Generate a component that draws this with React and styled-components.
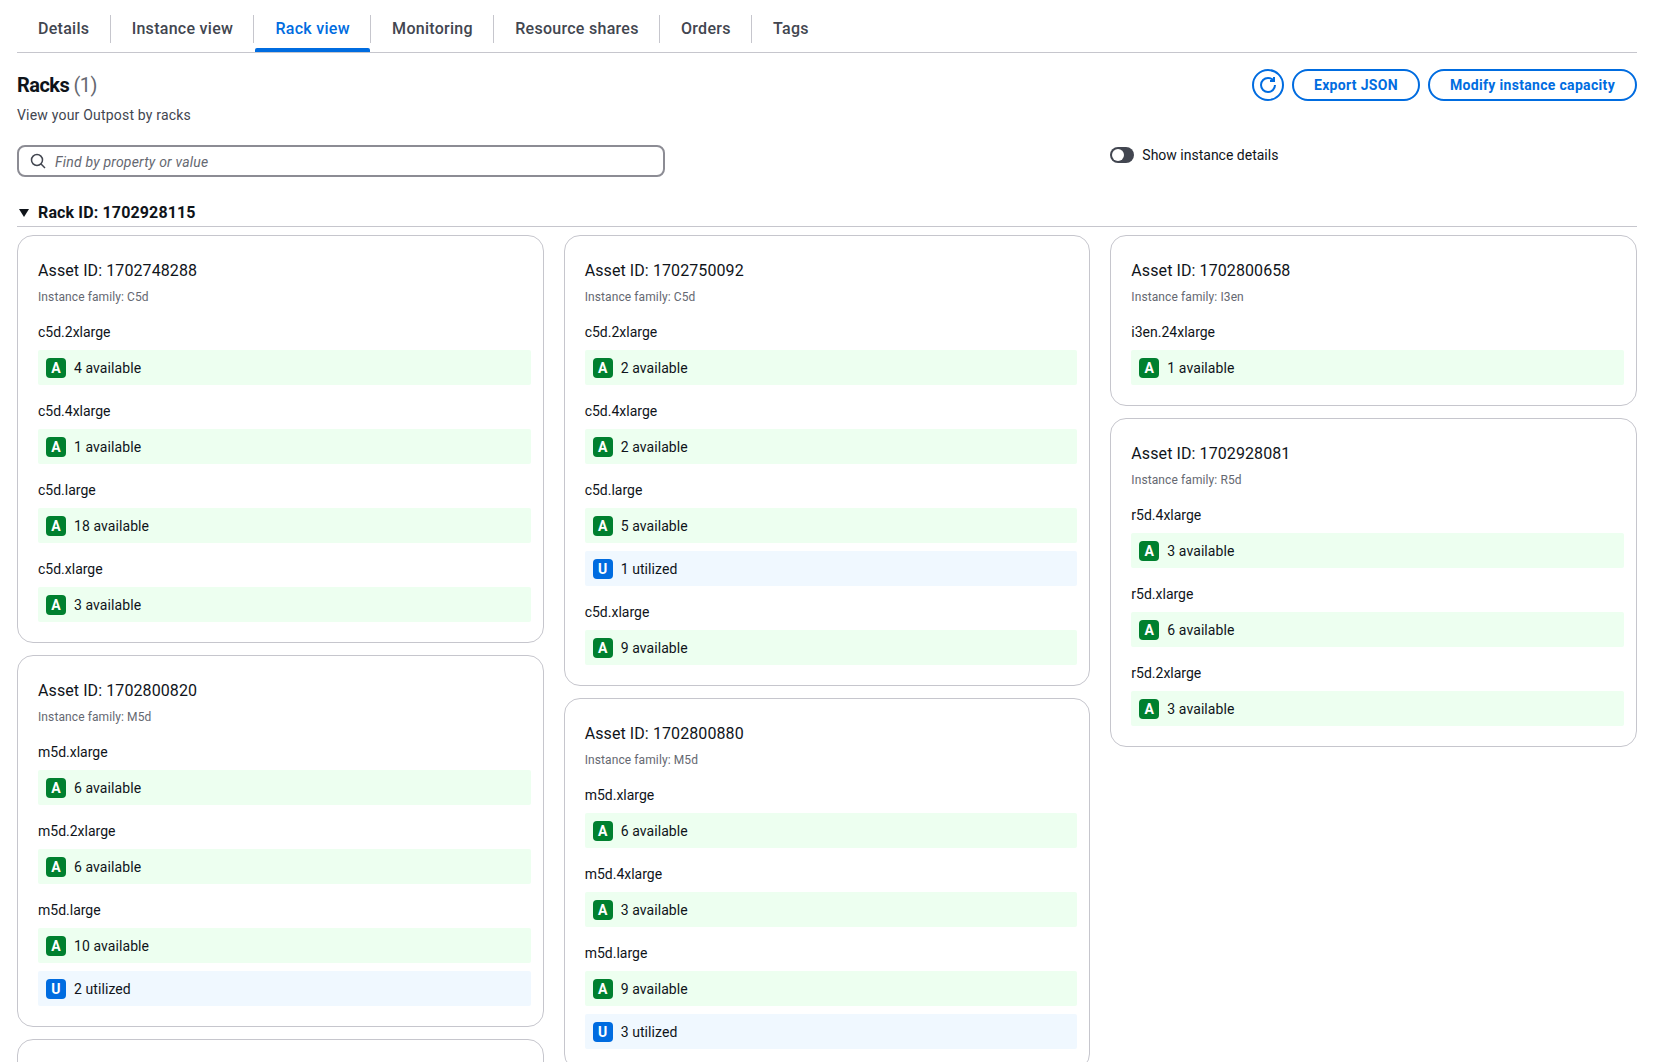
import React from 'react'
import styled, { createGlobalStyle } from 'styled-components'

const BLUE = '#006ce0'
const TEXT = '#0f141a'
const BORDER = '#c6c6cd'

const GlobalStyle = createGlobalStyle`
  html, body {
    margin: 0;
    background: #fff;
    color: ${TEXT};
    font-family: Roboto, "Liberation Sans", sans-serif;
    font-size: 14px;
    line-height: 20px;
  }
`

const Page = styled.div`
  height: 100vh;
  box-sizing: border-box;
  padding: 0 32px 0 17px;
  overflow: hidden;
`

const TabBar = styled.div`
  display: flex;
  height: 53px;
  box-sizing: border-box;
  border-bottom: 1px solid ${BORDER};
`

const Tab = styled.div`
  position: relative;
  padding-top: 15px;
  height: 52px;
  box-sizing: border-box;

  ${(p) =>
    p.$active &&
    `
    &::after {
      content: '';
      position: absolute;
      left: 1px;
      right: 1px;
      bottom: 0;
      height: 4px;
      background: ${BLUE};
      border-radius: 2px 2px 0 0;
    }
  `}
`

const TabLabel = styled.div`
  height: 28px;
  padding: 0 20.3px 0 21px;
  display: flex;
  align-items: center;
  font-size: 16px;
  font-weight: 500;
  letter-spacing: 0.28px;
  color: ${(p) => (p.$active ? BLUE : '#424650')};
  border-right: ${(p) => (p.$last ? 'none' : `1px solid ${BORDER}`)};
`

const HeaderRow = styled.div`
  display: flex;
  justify-content: space-between;
  align-items: flex-start;
  padding-top: 16px;
`

const HeaderText = styled.div`
  padding-top: 4px;
`

const Title = styled.h2`
  margin: 0;
  font-size: 20px;
  line-height: 24px;
  font-weight: 700;
  letter-spacing: -0.55px;
`

const Count = styled.span`
  font-weight: 400;
  color: #656871;
`

const Subtitle = styled.div`
  margin-top: 8px;
  font-size: 14px;
  line-height: 20px;
  letter-spacing: 0.2px;
  color: #424650;
`

const Actions = styled.div`
  display: flex;
  gap: 8px;
`

const IconButton = styled.button`
  width: 32px;
  height: 32px;
  padding: 0;
  display: flex;
  align-items: center;
  justify-content: center;
  background: #fff;
  border: 2px solid ${BLUE};
  border-radius: 50%;
  color: ${BLUE};
`

const Button = styled.button`
  height: 32px;
  box-sizing: border-box;
  padding: 0 20px;
  background: #fff;
  border: 2px solid ${BLUE};
  border-radius: 20px;
  color: ${BLUE};
  font-family: inherit;
  font-size: 14px;
  font-weight: 700;
  letter-spacing: 0.32px;
  white-space: nowrap;
`

const FilterRow = styled.div`
  display: grid;
  grid-template-columns: repeat(3, 1fr);
  column-gap: 20px;
  margin-top: 20px;
`

const Search = styled.div`
  grid-column: span 2;
  width: 648px;
  height: 32px;
  box-sizing: border-box;
  padding: 0 10px 0 11px;
  display: flex;
  align-items: center;
  gap: 9px;
  border: 2px solid #8c8c94;
  border-radius: 8px;
  color: #424650;
`

const Placeholder = styled.span`
  padding-top: 1px;
  font-size: 14px;
  font-style: italic;
  letter-spacing: 0.2px;
  color: #656871;
`

const ToggleWrap = styled.div`
  display: flex;
  align-items: center;
  gap: 8px;
  height: 20px;
`

const Toggle = styled.div`
  width: 24px;
  height: 16px;
  box-sizing: border-box;
  padding: 2px;
  background: #424650;
  border-radius: 8px;

  &::before {
    content: '';
    display: block;
    width: 12px;
    height: 12px;
    border-radius: 50%;
    background: #fff;
  }
`

const RackHeader = styled.div`
  display: flex;
  align-items: center;
  gap: 9px;
  margin-top: 25px;
  padding: 0 0 2px 2px;
  border-bottom: 1px solid ${BORDER};
  font-size: 16px;
  line-height: 22px;
  font-weight: 700;
  letter-spacing: 0.14px;
`

const Caret = styled.span`
  width: 0;
  height: 0;
  border-left: 5px solid transparent;
  border-right: 5px solid transparent;
  border-top: 8px solid ${TEXT};
`

const Columns = styled.div`
  display: grid;
  grid-template-columns: repeat(3, 1fr);
  column-gap: 20px;
  margin-top: 8px;
  align-items: start;
`

const Column = styled.div`
  display: flex;
  flex-direction: column;
  gap: 12px;
`

const Card = styled.div`
  box-sizing: border-box;
  padding: 24px 12px 20px 20px;
  border: 1px solid ${BORDER};
  border-radius: 16px;
  min-height: ${(p) => p.$minHeight || 0}px;
`

const AssetTitle = styled.div`
  font-size: 16px;
  line-height: 22px;
  letter-spacing: 0.09px;
`

const Family = styled.div`
  margin: 7px 0 17px;
  font-size: 12px;
  line-height: 16px;
  letter-spacing: 0.1px;
  color: #656871;
`

const InstanceType = styled.div`
  margin: 16px 0 8px;
  font-size: 14px;
  line-height: 20px;
`

const StatusList = styled.div`
  display: flex;
  flex-direction: column;
  gap: 8px;
`

const StatusRow = styled.div`
  display: flex;
  align-items: center;
  gap: 8px;
  height: 35px;
  padding-left: 8px;
  letter-spacing: 0.08px;
  background: ${(p) => (p.$kind === 'A' ? '#edfff0' : '#f0f8ff')};
  border-radius: 2px;
`

const Badge = styled.span`
  width: 20px;
  height: 20px;
  display: flex;
  align-items: center;
  justify-content: center;
  border-radius: 4px;
  background: ${(p) => (p.$kind === 'A' ? '#00802f' : BLUE)};
  color: #fff;
  font-size: 14px;
  font-weight: 700;
`

const TABS = ['Details', 'Instance view', 'Rack view', 'Monitoring', 'Resource shares', 'Orders', 'Tags']

const A = (n) => ({ kind: 'A', text: `${n} available` })
const U = (n) => ({ kind: 'U', text: `${n} utilized` })

const COLUMNS = [
  [
    {
      id: '1702748288',
      family: 'C5d',
      types: [
        ['c5d.2xlarge', [A(4)]],
        ['c5d.4xlarge', [A(1)]],
        ['c5d.large', [A(18)]],
        ['c5d.xlarge', [A(3)]],
      ],
    },
    {
      id: '1702800820',
      family: 'M5d',
      types: [
        ['m5d.xlarge', [A(6)]],
        ['m5d.2xlarge', [A(6)]],
        ['m5d.large', [A(10), U(2)]],
      ],
    },
  ],
  [
    {
      id: '1702750092',
      family: 'C5d',
      types: [
        ['c5d.2xlarge', [A(2)]],
        ['c5d.4xlarge', [A(2)]],
        ['c5d.large', [A(5), U(1)]],
        ['c5d.xlarge', [A(9)]],
      ],
    },
    {
      id: '1702800880',
      family: 'M5d',
      types: [
        ['m5d.xlarge', [A(6)]],
        ['m5d.4xlarge', [A(3)]],
        ['m5d.large', [A(9), U(3)]],
      ],
    },
  ],
  [
    {
      id: '1702800658',
      family: 'I3en',
      types: [['i3en.24xlarge', [A(1)]]],
    },
    {
      id: '1702928081',
      family: 'R5d',
      types: [
        ['r5d.4xlarge', [A(3)]],
        ['r5d.xlarge', [A(6)]],
        ['r5d.2xlarge', [A(3)]],
      ],
    },
  ],
]

function RefreshIcon () {
  return (
    <svg width="16" height="16" viewBox="0 0 16 16" fill="none" stroke="currentColor" strokeWidth="2">
      <path d="M15 8c0 3.87-3.13 7-7 7s-7-3.13-7-7 3.13-7 7-7c2.37 0 4.47 1.18 5.74 2.98" />
      <path d="M14 0v4h-4" />
    </svg>
  )
}

function SearchIcon () {
  return (
    <svg width="16" height="16" viewBox="0 0 16 16" fill="none" stroke="currentColor" strokeWidth="1.5">
      <circle cx="7" cy="7" r="5.5" />
      <path d="M15 15l-4.2-4.2" />
    </svg>
  )
}

function AssetCard ({ asset }) {
  return (
    <Card>
      <AssetTitle>Asset ID: {asset.id}</AssetTitle>
      <Family>Instance family: {asset.family}</Family>
      {asset.types.map(([name, rows]) => (
        <div key={name}>
          <InstanceType>{name}</InstanceType>
          <StatusList>
            {rows.map((row) => (
              <StatusRow key={row.text} $kind={row.kind}>
                <Badge $kind={row.kind}>{row.kind}</Badge>
                {row.text}
              </StatusRow>
            ))}
          </StatusList>
        </div>
      ))}
    </Card>
  )
}

export default function App () {
  return (
    <>
      <GlobalStyle />
      <Page>
        <TabBar>
          {TABS.map((tab, i) => (
            <Tab key={tab} $active={tab === 'Rack view'}>
              <TabLabel $active={tab === 'Rack view'} $last={i === TABS.length - 1}>{tab}</TabLabel>
            </Tab>
          ))}
        </TabBar>
        <HeaderRow>
          <HeaderText>
            <Title>Racks <Count>(1)</Count></Title>
            <Subtitle>View your Outpost by racks</Subtitle>
          </HeaderText>
          <Actions>
            <IconButton><RefreshIcon /></IconButton>
            <Button>Export JSON</Button>
            <Button>Modify instance capacity</Button>
          </Actions>
        </HeaderRow>
        <FilterRow>
          <Search>
            <SearchIcon />
            <Placeholder>Find by property or value</Placeholder>
          </Search>
          <ToggleWrap>
            <Toggle />
            Show instance details
          </ToggleWrap>
        </FilterRow>
        <RackHeader><Caret />Rack ID: 1702928115</RackHeader>
        <Columns>
          {COLUMNS.map((assets, i) => (
            <Column key={i}>
              {assets.map((asset) => <AssetCard key={asset.id} asset={asset} />)}
              {i === 0 && <Card $minHeight={100} />}
            </Column>
          ))}
        </Columns>
      </Page>
    </>
  )
}
